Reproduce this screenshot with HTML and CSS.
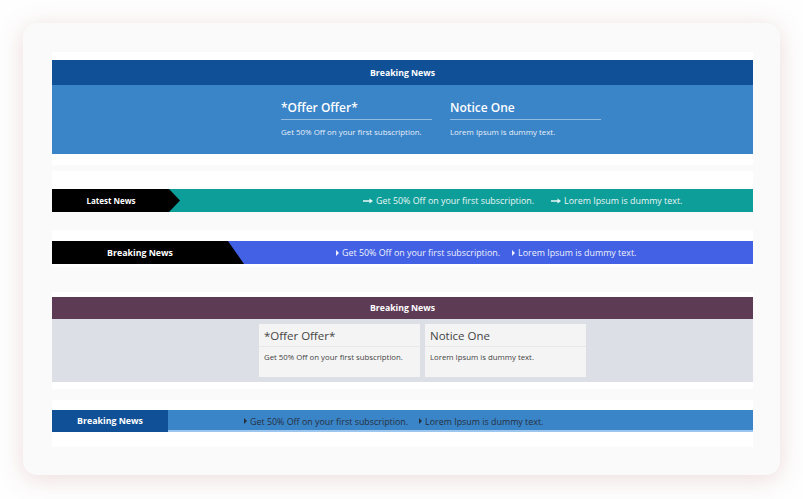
FILE: index.html
```html
<!DOCTYPE html>
<html lang="en">
<head>
<meta charset="utf-8">
<title>News tickers</title>
<link rel="stylesheet" href="styles.css">
</head>
<body>
<div class="card">
  <section class="demo demo1">
    <div class="head1">Breaking News</div>
    <div class="body1">
      <div class="item1"><h3>*Offer Offer*</h3><p>Get 50% Off on your first subscription.</p></div>
      <div class="item1"><h3>Notice One</h3><p>Lorem Ipsum is dummy text.</p></div>
    </div>
  </section>

  <section class="demo demo2">
    <div class="bar bar2">
      <div class="label label2">Latest News</div>
      <div class="items items2">
        <span class="tick"><svg class="arrow" viewBox="0 0 10 6" width="10" height="6"><path d="M0 2.2h6.5V0.4L10 3 6.5 5.6V3.8H0z" fill="currentColor"/></svg>Get 50% Off on your first subscription.</span>
        <span class="tick"><svg class="arrow" viewBox="0 0 10 6" width="10" height="6"><path d="M0 2.2h6.5V0.4L10 3 6.5 5.6V3.8H0z" fill="currentColor"/></svg>Lorem Ipsum is dummy text.</span>
      </div>
    </div>
  </section>

  <section class="demo demo3">
    <div class="bar bar3">
      <div class="label label3">Breaking News</div>
      <div class="items items3">
        <span class="tick"><svg class="caret" viewBox="0 0 3 6" width="3" height="6"><path d="M0 0L3 3 0 6z" fill="currentColor"/></svg>Get 50% Off on your first subscription.</span>
        <span class="tick"><svg class="caret" viewBox="0 0 3 6" width="3" height="6"><path d="M0 0L3 3 0 6z" fill="currentColor"/></svg>Lorem Ipsum is dummy text.</span>
      </div>
    </div>
  </section>

  <section class="demo demo4">
    <div class="head4">Breaking News</div>
    <div class="body4">
      <div class="item4"><h3>*Offer Offer*</h3><p>Get 50% Off on your first subscription.</p></div>
      <div class="item4"><h3>Notice One</h3><p>Lorem Ipsum is dummy text.</p></div>
    </div>
  </section>

  <section class="demo demo5">
    <div class="bar bar5">
      <div class="label label5">Breaking News</div>
      <div class="items items5">
        <span class="tick"><svg class="caret" viewBox="0 0 3 6" width="3" height="6"><path d="M0 0L3 3 0 6z" fill="currentColor"/></svg>Get 50% Off on your first subscription.</span>
        <span class="tick"><svg class="caret" viewBox="0 0 3 6" width="3" height="6"><path d="M0 0L3 3 0 6z" fill="currentColor"/></svg>Lorem Ipsum is dummy text.</span>
      </div>
    </div>
  </section>
</div>
</body>
</html>
```

FILE: styles.css
```css
* { box-sizing: border-box; }
html, body { margin: 0; padding: 0; }
body {
  background: #fefefe;
  font-family: "Open Sans", "DejaVu Sans", sans-serif;
  width: 803px;
  height: 499px;
  overflow: hidden;
}
.card {
  margin: 23px 0 0 23px;
  width: 757px;
  height: 452px;
  padding: 29px 27px 0 29px;
  background: #fafafa;
  border-radius: 14px;
  box-shadow: 0 4px 24px rgba(190, 120, 120, 0.26);
  display: flex;
  flex-direction: column;
}
.demo { background: #fff; }
h3, p { margin: 0; white-space: nowrap; }

/* demo 1 */
.demo1 { padding: 8px 0 11px; margin-bottom: 6px; }
.head1 {
  height: 25px;
  background: #0f5096;
  color: #fff;
  font-size: 8.7px;
  font-weight: 700;
  display: flex;
  align-items: center;
  justify-content: center;
}
.body1 {
  height: 69px;
  background: #3a84c8;
  display: flex;
  gap: 18px;
  padding: 14px 0 0 229px;
}
.item1 { width: 151px; }
.item1 h3 {
  font-size: 12px;
  line-height: 18px;
  font-weight: 600;
  color: #fff;
  padding-bottom: 2px;
  border-bottom: 1px solid rgba(255, 255, 255, 0.45);
}
.item1 p {
  margin-top: 6px;
  font-size: 7.9px;
  line-height: 12px;
  color: #e6eff8;
}

/* bars */
.bar {
  display: flex;
  align-items: center;
  font-size: 8.9px;
}
.label {
  height: 100%;
  display: flex;
  align-items: center;
  justify-content: center;
  color: #fff;
  font-weight: 700;
  flex: none;
}
.items { display: flex; align-items: center; white-space: nowrap; }
.tick { display: inline-flex; align-items: center; }

.demo2 { padding-top: 18px; margin-bottom: 18px; }
.bar2 { height: 23px; background: #0e9e99; color: #e9f6f5; font-size: 8.9px; }
.label2 {
  width: 128px;
  padding-right: 10px;
  background: #000;
  font-size: 8px;
  clip-path: polygon(0 0, 117px 0, 128px 50%, 117px 100%, 0 100%);
}
.items2 { padding-left: 183px; gap: 17px; }
.items2 .arrow { margin-right: 3px; }

.demo3 { padding: 11px 0 3px; margin-bottom: 25px; }
.bar3 { height: 23px; background: #4361e4; color: #eef1fd; }
.label3 {
  width: 192px;
  padding-right: 16px;
  background: #000;
  font-size: 8.8px;
  clip-path: polygon(0 0, 176px 0, 192px 100%, 0 100%);
}
.items3 { padding-left: 92px; gap: 12px; }
.caret { margin-right: 3px; }

/* demo 4 */
.demo4 { padding: 5px 0 7px; margin-bottom: 11px; }
.head4 {
  height: 22px;
  background: #5e3b55;
  color: #fff;
  font-size: 8.7px;
  font-weight: 700;
  display: flex;
  align-items: center;
  justify-content: center;
}
.body4 {
  height: 63px;
  background: #dcdfe6;
  display: flex;
  gap: 5px;
  padding: 5px 0 0 207px;
}
.item4 { width: 161px; height: 53px; background: #f4f4f4; }
.item4 h3 {
  height: 23px;
  padding: 2px 5px 0;
  font-size: 11.5px;
  line-height: 20px;
  font-weight: 400;
  color: #444;
  border-bottom: 1px solid #e8e8e8;
}
.item4 p {
  padding: 4px 5px 0;
  font-size: 7.8px;
  line-height: 12px;
  color: #444;
}

/* demo 5 */
.demo5 { padding: 10px 0 15px; }
.bar5 {
  height: 22px;
  background: #3a84c8;
  color: #26303d;
  box-shadow: inset 0 -2px 0 #9cc6ee;
}
.label5 { width: 116px; background: #0f5096; font-size: 8.8px; }
.items5 { padding-left: 76px; gap: 11px; }
```
